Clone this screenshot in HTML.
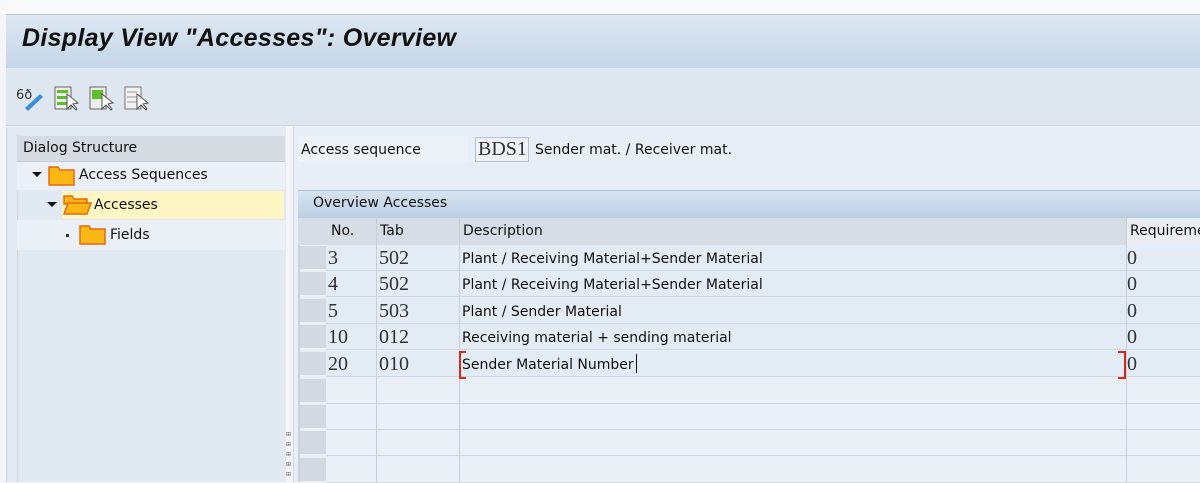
<!DOCTYPE html>
<html><head><meta charset="utf-8"><style>
*{margin:0;padding:0;box-sizing:border-box}
body{width:1200px;height:482px;overflow:hidden;background:#f3f5f8;font-family:"DejaVu Sans","Liberation Sans",sans-serif;position:relative;color:#111}
.a{position:absolute}
.t{font-size:14px;letter-spacing:0}
.s{font-family:"Liberation Serif",serif;font-size:20px;color:#333}
.row{position:absolute;left:326px;right:0;height:26px;border-bottom:1px solid #cfd8e2;background:#e3ebf4}
.sel{position:absolute;left:300px;width:26px;height:25px;background:#d3d9e0;border-bottom:2px solid #eef1f4}
</style></head><body>
<div class="a" style="left:0;top:0;width:1200px;height:14px;background:#f8f9fb"></div>
<div class="a" style="left:6px;top:14px;width:1194px;height:54px;background:linear-gradient(#dde7f1,#c5d6e7);border-top:1px solid #b8c6d4"></div>
<div class="a" style="left:22px;top:24px;font-family:'Liberation Sans',sans-serif;font-weight:bold;font-style:italic;font-size:25px;letter-spacing:0.3px;color:#111">Display View "Accesses": Overview</div>
<div class="a" style="left:6px;top:68px;width:1194px;height:58px;background:#dee7f0;border-bottom:1px solid #c9d4df"></div>
<svg class="a" style="left:15px;top:82px" width="140" height="32" viewBox="0 0 140 32">
<text x="1" y="17" font-size="13" font-family="DejaVu Sans" fill="#333">6ð</text>
<path d="M10 26 L25 12 L28 15 L13 29 Z" fill="#3b8fd6"/>
<rect x="40" y="5" width="16" height="22" fill="#eee" stroke="#666"/>
<rect x="42" y="8" width="11" height="3" fill="#5cbf2a"/><rect x="42" y="14" width="11" height="3" fill="#5cbf2a"/><rect x="42" y="20" width="11" height="3" fill="#5cbf2a"/>
<path d="M52 12 L52 27 L56 23 L61 28 L62 27 L58 22 L63 21 Z" fill="#fff" stroke="#555"/>
<rect x="75" y="5" width="16" height="22" fill="#eee" stroke="#666"/>
<rect x="77" y="8" width="11" height="9" fill="#5cbf2a"/>
<path d="M87 12 L87 27 L91 23 L96 28 L97 27 L93 22 L98 21 Z" fill="#fff" stroke="#555"/>
<rect x="110" y="5" width="16" height="22" fill="#f2f2f2" stroke="#777"/>
<path d="M112 10h10M112 15h10M112 20h10" stroke="#999"/>
<path d="M122 12 L122 27 L126 23 L131 28 L132 27 L128 22 L133 21 Z" fill="#fff" stroke="#555"/>
</svg>
<div class="a" style="left:6px;top:127px;width:280px;height:355px;background:#e3eaf3;border-left:1px solid #c9d3de"></div>
<div class="a" style="left:17px;top:135px;width:268px;height:347px;background:#e1e9f2;border-left:1px solid #cfd8e2"></div>
<div class="a" style="left:17px;top:136px;width:268px;height:26px;background:#d6dbe1;border-bottom:1px solid #c4ccd5"></div>
<div class="a t" style="left:23px;top:140px">Dialog Structure</div>
<div class="a" style="left:17px;top:162px;width:268px;height:28px;background:#eaf0f6"></div>
<div class="a" style="left:62px;top:191px;width:222px;height:28px;background:#fdf6c4"></div>
<div class="a" style="left:17px;top:220px;width:268px;height:30px;background:#eaf0f6"></div>
<div class="a" style="left:32px;top:172px;width:0;height:0;border-left:5px solid transparent;border-right:5px solid transparent;border-top:5px solid #111"></div>
<svg class="a" style="left:48px;top:165px" width="28" height="22"><path d="M1 2h9l2 3h14v15H1z" fill="#fbb714" stroke="#e56a12" stroke-width="1.5"/></svg>
<div class="a t" style="left:79px;top:167px">Access Sequences</div>
<div class="a" style="left:47px;top:202px;width:0;height:0;border-left:5px solid transparent;border-right:5px solid transparent;border-top:5px solid #111"></div>
<svg class="a" style="left:63px;top:194px" width="30" height="22"><path d="M1 2h8l2 3h13v5H1z" fill="#fbb714" stroke="#e56a12" stroke-width="1.5"/><path d="M1 20l4-11h23l-4 11z" fill="#fbb714" stroke="#e56a12" stroke-width="1.5"/></svg>
<div class="a t" style="left:94px;top:197px">Accesses</div>
<div class="a" style="left:66px;top:234px;width:3px;height:3px;background:#333"></div>
<svg class="a" style="left:79px;top:224px" width="28" height="22"><path d="M1 2h9l2 3h14v15H1z" fill="#fbb714" stroke="#e56a12" stroke-width="1.5"/></svg>
<div class="a t" style="left:110px;top:227px">Fields</div>
<div class="a" style="left:286px;top:430px;font-size:6px;color:#666;line-height:10px">⊞<br>⊞<br>⊞<br>⊞<br>⊞</div>
<div class="a" style="left:293px;top:127px;width:907px;height:355px;background:#e8eef5;border-left:1px solid #d0d8e1"></div>
<div class="a" style="left:298px;top:136px;width:170px;height:26px;background:#edf2f7"></div>
<div class="a t" style="left:301px;top:142px">Access sequence</div>
<div class="a" style="left:475px;top:137px;width:54px;height:25px;border:1px solid #b8c3cf;background:#edf2f7"></div>
<div class="a s" style="left:478px;top:138px">BDS1</div>
<div class="a t" style="left:535px;top:142px">Sender mat. / Receiver mat.</div>
<div class="a" style="left:298px;top:190px;width:902px;height:28px;background:linear-gradient(#d6e3f0,#bccfe2);border-top:1px solid #b3c2d2"></div>
<div class="a t" style="left:313px;top:195px">Overview Accesses</div>
<div class="a" style="left:298px;top:218px;width:902px;height:27px;background:#d6dde4"></div>
<div class="a" style="left:1126px;top:218px;width:74px;height:27px;background:#e9edf1;border-left:1px solid #c5ccd4"></div>
<div class="a t" style="left:331px;top:223px">No.</div>
<div class="a t" style="left:380px;top:223px">Tab</div>
<div class="a t" style="left:463px;top:223px">Description</div>
<div class="a t" style="left:1130px;top:223px">Requirement</div>
<div class="a" style="left:298px;top:245px;width:2px;height:237px;background:#c9d1da"></div>
<div class="row" style="top:245px"></div><div class="row" style="top:271px"></div><div class="row" style="top:298px"></div><div class="row" style="top:324px"></div><div class="row" style="top:351px"></div>
<div class="row" style="top:378px;background:#eaf0f6"></div><div class="row" style="top:404px;background:#eaf0f6"></div><div class="row" style="top:430px;background:#eaf0f6"></div><div class="row" style="top:457px;background:#eaf0f6"></div>
<div class="sel" style="top:246px"></div><div class="sel" style="top:272px"></div><div class="sel" style="top:299px"></div><div class="sel" style="top:325px"></div><div class="sel" style="top:352px"></div><div class="sel" style="top:379px"></div><div class="sel" style="top:405px"></div><div class="sel" style="top:431px"></div><div class="sel" style="top:458px"></div>
<div class="a" style="left:376px;top:218px;width:1px;height:264px;background:#c6cfd9"></div>
<div class="a" style="left:459px;top:218px;width:1px;height:264px;background:#c6cfd9"></div>
<div class="a" style="left:1126px;top:245px;width:1px;height:237px;background:#c6cfd9"></div>
<div class="a s" style="left:328px;top:247px">3</div><div class="a s" style="left:379px;top:247px">502</div><div class="a t" style="left:462px;top:251px">Plant / Receiving Material+Sender Material</div><div class="a s" style="left:1127px;top:247px">0</div>
<div class="a s" style="left:328px;top:273px">4</div><div class="a s" style="left:379px;top:273px">502</div><div class="a t" style="left:462px;top:277px">Plant / Receiving Material+Sender Material</div><div class="a s" style="left:1127px;top:273px">0</div>
<div class="a s" style="left:328px;top:300px">5</div><div class="a s" style="left:379px;top:300px">503</div><div class="a t" style="left:462px;top:304px">Plant / Sender Material</div><div class="a s" style="left:1127px;top:300px">0</div>
<div class="a s" style="left:328px;top:326px">10</div><div class="a s" style="left:379px;top:326px">012</div><div class="a t" style="left:462px;top:330px">Receiving material + sending material</div><div class="a s" style="left:1127px;top:326px">0</div>
<div class="a s" style="left:328px;top:353px">20</div><div class="a s" style="left:379px;top:353px">010</div><div class="a t" style="left:462px;top:357px">Sender Material Number</div><div class="a s" style="left:1127px;top:353px">0</div>
<div class="a" style="left:636px;top:354px;width:1px;height:19px;background:#111"></div>
<div class="a" style="left:459px;top:351px;width:7px;height:28px;border:2px solid #d42a1a;border-right:none"></div>
<div class="a" style="left:1118px;top:351px;width:8px;height:28px;border:2px solid #d42a1a;border-left:none"></div>
</body></html>
